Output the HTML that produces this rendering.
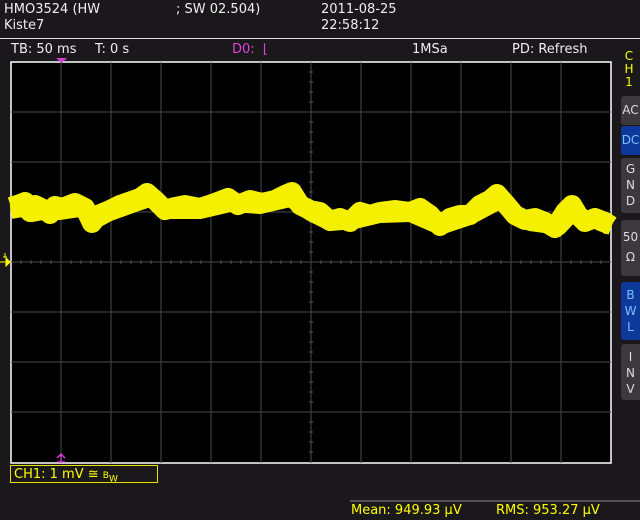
<!DOCTYPE html>
<html><head><style>
html,body{margin:0;padding:0;background:#1b181c;width:640px;height:520px;overflow:hidden;font-family:"DejaVu Sans","Liberation Sans",sans-serif;}
.t{position:absolute;color:#eee;font-size:13px;white-space:nowrap;line-height:15px;}
.btn{position:absolute;left:621px;width:19px;background:#3c393d;color:#ddd;font-size:12px;text-align:center;line-height:16px;border-radius:3px 0 0 3px;}
.blue{background:#0d3a9a;color:#7cc0ff;}
</style></head><body>
<div class="t" style="left:4px;top:2px">HMO3524 (HW</div>
<div class="t" style="left:176px;top:2px">; SW 02.504)</div>
<div class="t" style="left:321px;top:2px">2011-08-25</div>
<div class="t" style="left:4px;top:18px">Kiste7</div>
<div class="t" style="left:321px;top:18px">22:58:12</div>
<div style="position:absolute;left:0;top:38px;width:640px;height:1px;background:#ddd"></div>
<div class="t" style="left:11px;top:42px">TB: 50 ms</div>
<div class="t" style="left:95px;top:42px">T: 0 s</div>
<div class="t" style="left:232px;top:42px;color:#e040e0">D0: &nbsp;⌊</div>
<div class="t" style="left:412px;top:42px">1MSa</div>
<div class="t" style="left:512px;top:42px">PD: Refresh</div>
<div class="t" style="left:623px;top:50px;color:#ffff00;font-size:12px;line-height:13px;width:12px;text-align:center">C<br>H<br>1</div>
<div class="btn" style="top:96px;height:29px;line-height:29px">AC</div>
<div class="btn blue" style="top:126px;height:29px;line-height:29px">DC</div>
<div class="btn" style="top:158px;padding-top:3px;height:52px">G<br>N<br>D</div>
<div class="btn" style="top:220px;line-height:20px;padding-top:7px;height:49px">50<br>Ω</div>
<div class="btn blue" style="top:282px;padding-top:5px;height:53px">B<br>W<br>L</div>
<div class="btn" style="top:344px;padding-top:5px;height:51px">I<br>N<br>V</div>
<svg style="position:absolute;left:0;top:0" width="640" height="520">
<rect x="11" y="62" width="600" height="401" fill="#000" stroke="#fff" stroke-width="1.5"/>
<g stroke="#4a4a4a" stroke-width="1">
<path d="M61 62V463M111 62V463M161 62V463M211 62V463M261 62V463M311 62V463M361 62V463M411 62V463M461 62V463M511 62V463M561 62V463"/>
<path d="M11 112H611M11 162H611M11 212H611M11 262H611M11 312H611M11 362H611M11 412H611"/>
</g>
<path stroke="#555" d="M21 260v4M31 260v4M41 260v4M51 260v4M71 260v4M81 260v4M91 260v4M101 260v4M121 260v4M131 260v4M141 260v4M151 260v4M171 260v4M181 260v4M191 260v4M201 260v4M221 260v4M231 260v4M241 260v4M251 260v4M271 260v4M281 260v4M291 260v4M301 260v4M321 260v4M331 260v4M341 260v4M351 260v4M371 260v4M381 260v4M391 260v4M401 260v4M421 260v4M431 260v4M441 260v4M451 260v4M471 260v4M481 260v4M491 260v4M501 260v4M521 260v4M531 260v4M541 260v4M551 260v4M571 260v4M581 260v4M591 260v4M601 260v4M309 72h4M309 82h4M309 92h4M309 102h4M309 122h4M309 132h4M309 142h4M309 152h4M309 172h4M309 182h4M309 192h4M309 202h4M309 222h4M309 232h4M309 242h4M309 252h4M309 272h4M309 282h4M309 292h4M309 302h4M309 322h4M309 332h4M309 342h4M309 352h4M309 372h4M309 382h4M309 392h4M309 402h4M309 422h4M309 432h4M309 442h4M309 452h4"/>
<g fill="none" stroke="#f5f000" stroke-linejoin="round">
<polyline stroke-width="20" points="11,207 20,204 25,202 30,212 35,205 45,210 50,214 55,206 62,208 75,203 85,208 92,223 98,215 110,210 120,205 140,198 147,193 155,200 165,210 175,207 185,205 200,208 215,203 228,198 238,205 250,200 262,203 275,200 285,195 292,192 300,205 310,210 320,212 330,221 340,218 350,222 360,212 370,215 380,212 395,210 410,212 420,208 430,215 440,226 450,218 460,215 470,215 480,205 490,200 497,194 505,203 515,215 525,220 535,218 545,222 555,228 565,212 572,205 578,215 585,222 595,218 605,222 611,226"/>
<polyline stroke-width="14" points="11,212 22,210 32,215 48,212 60,213 80,210 95,222 110,214 135,205 150,200 170,212 200,212 230,205 260,207 290,200 310,214 330,224 355,222 380,216 410,215 440,228 470,218 500,202 530,224 560,228 575,212 600,224 611,228"/>
</g>
<path d="M56 58h11l-5.5 5z" fill="#d040d0"/>
<path d="M61 462v-8M57 458l4-4 4 4M57 462h8" stroke="#e040e0" stroke-width="1.3" fill="none"/>
<path d="M3 257h4M5 257v-4M0 262h7M6 258l4 4-4 4z" stroke="#ffff00" fill="#ffff00" stroke-width="1"/>
<rect x="10.5" y="465.5" width="147" height="17" fill="none" stroke="#e8e000" stroke-width="1"/>
<path d="M350 501H640" stroke="#888"/>
</svg>
<div class="t" style="left:14px;top:467px;color:#ffff00">CH1: 1 mV ≅ <span style="font-size:9px">B</span><sub style="font-size:9px">W</sub></div>
<div class="t" style="left:351px;top:503px;color:#ffff00">Mean: 949.93 µV</div>
<div class="t" style="left:496px;top:503px;color:#ffff00">RMS: 953.27 µV</div>
</body></html>
